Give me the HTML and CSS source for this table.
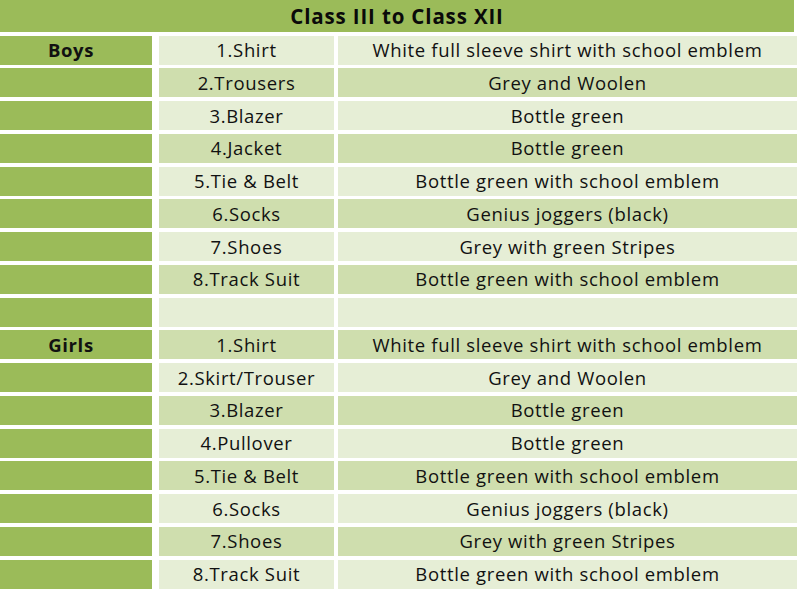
FILE: index.html
```html
<!DOCTYPE html>
<html>
<head>
<meta charset="utf-8">
<link rel="stylesheet" href="styles.css">
</head>
<body>
<div class="sheet">
  <div class="title">Class III to Class XII</div>
  <div class="grid">
    <div class="c1">Boys</div><div class="c2 lt">1.Shirt</div><div class="c3 lt">White full sleeve shirt with school emblem</div>
    <div class="c1"></div><div class="c2 dk">2.Trousers</div><div class="c3 dk">Grey and Woolen</div>
    <div class="c1"></div><div class="c2 lt">3.Blazer</div><div class="c3 lt">Bottle green</div>
    <div class="c1"></div><div class="c2 dk">4.Jacket</div><div class="c3 dk">Bottle green</div>
    <div class="c1"></div><div class="c2 lt">5.Tie &amp; Belt</div><div class="c3 lt">Bottle green with school emblem</div>
    <div class="c1"></div><div class="c2 dk">6.Socks</div><div class="c3 dk">Genius joggers (black)</div>
    <div class="c1"></div><div class="c2 lt">7.Shoes</div><div class="c3 lt">Grey with green Stripes</div>
    <div class="c1"></div><div class="c2 dk">8.Track Suit</div><div class="c3 dk">Bottle green with school emblem</div>
    <div class="c1"></div><div class="c2 lt"></div><div class="c3 lt"></div>
    <div class="c1">Girls</div><div class="c2 dk">1.Shirt</div><div class="c3 dk">White full sleeve shirt with school emblem</div>
    <div class="c1"></div><div class="c2 lt">2.Skirt/Trouser</div><div class="c3 lt">Grey and Woolen</div>
    <div class="c1"></div><div class="c2 dk">3.Blazer</div><div class="c3 dk">Bottle green</div>
    <div class="c1"></div><div class="c2 lt">4.Pullover</div><div class="c3 lt">Bottle green</div>
    <div class="c1"></div><div class="c2 dk">5.Tie &amp; Belt</div><div class="c3 dk">Bottle green with school emblem</div>
    <div class="c1"></div><div class="c2 lt">6.Socks</div><div class="c3 lt">Genius joggers (black)</div>
    <div class="c1"></div><div class="c2 dk">7.Shoes</div><div class="c3 dk">Grey with green Stripes</div>
    <div class="c1"></div><div class="c2 lt">8.Track Suit</div><div class="c3 lt">Bottle green with school emblem</div>
  </div>
</div>
</body>
</html>
```
FILE: styles.css
```css
html, body {
  margin: 0;
  padding: 0;
  background: #ffffff;
}
body {
  font-family: "Open Sans", "Noto Sans", sans-serif;
  color: #111111;
  width: 800px;
  height: 590px;
  overflow: hidden;
}
.sheet {
  width: 797px;
}
.title {
  box-sizing: border-box;
  width: 794px;
  height: 32px;
  padding-bottom: 1px;
  background: #9bbb59;
  font-weight: 700;
  font-size: 20.5px;
  letter-spacing: 0.85px;
  display: flex;
  align-items: center;
  justify-content: center;
  color: #0a0a0a;
}
.grid {
  margin-top: 3.5px;
  display: grid;
  grid-template-columns: 152px 182px 463px;
  grid-auto-rows: 29px;
  row-gap: 3.75px;
}
.grid > div {
  box-sizing: border-box;
  display: flex;
  align-items: center;
  justify-content: center;
  padding-bottom: 1px;
  font-size: 18.5px;
  letter-spacing: 0.65px;
  white-space: nowrap;
}
.c1 {
  background: #9bbb59;
  font-weight: 700;
  padding-right: 10px;
}
.c2 {
  margin-left: 7px;
}
.c3 {
  margin-left: 4px;
}
.lt {
  background: #e6eed6;
}
.dk {
  background: #cfdeae;
}
```
